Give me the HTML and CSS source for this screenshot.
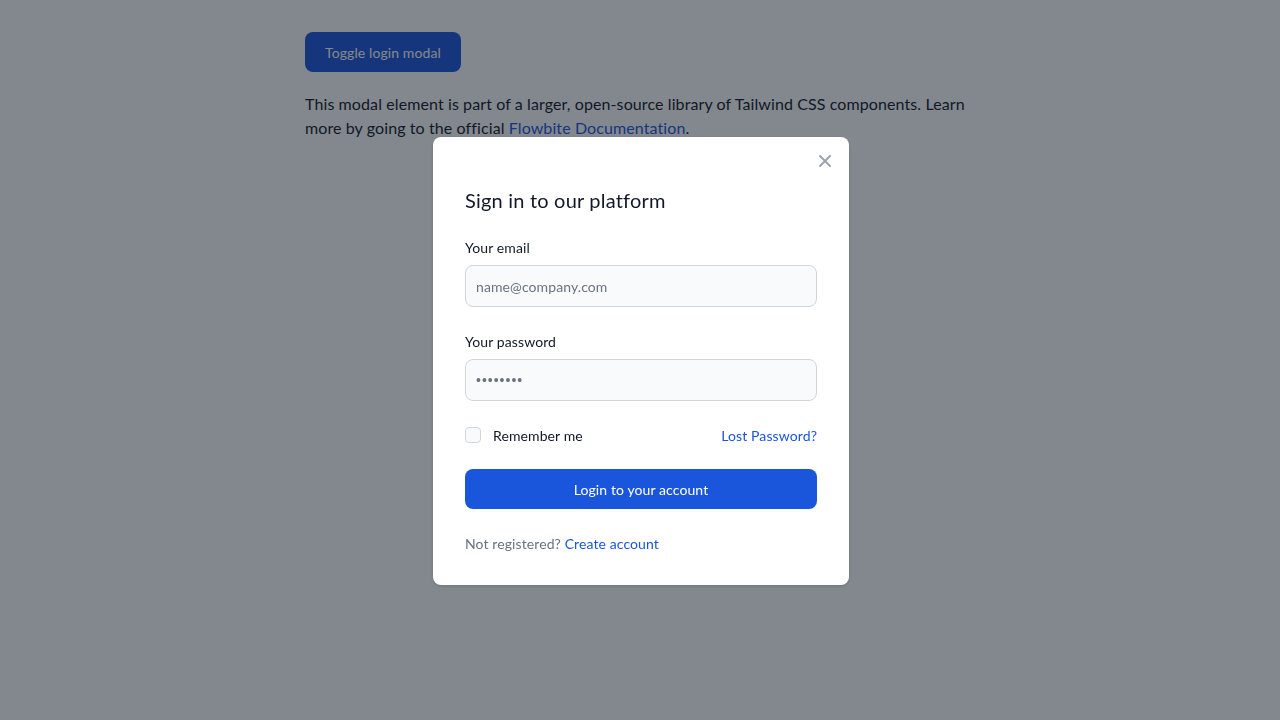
FILE: index.html
```html
<!DOCTYPE html>
<html lang="en">
<head>
<meta charset="utf-8">
<title>Login modal</title>
<link rel="stylesheet" href="styles.css">
</head>
<body>
<main class="page">
  <button class="toggle-btn" type="button">Toggle login modal</button>
  <p class="intro">This modal element is part of a larger, open-source library of Tailwind CSS components. Learn more by going to the official <a href="#" class="link">Flowbite Documentation</a>.</p>
</main>

<div class="overlay">
  <div class="modal">
    <div class="modal-header">
      <button class="close-btn" type="button" aria-label="Close">
        <svg width="20" height="20" viewBox="0 0 20 20" fill="currentColor"><path fill-rule="evenodd" d="M4.293 4.293a1 1 0 011.414 0L10 8.586l4.293-4.293a1 1 0 111.414 1.414L11.414 10l4.293 4.293a1 1 0 01-1.414 1.414L10 11.414l-4.293 4.293a1 1 0 01-1.414-1.414L8.586 10 4.293 5.707a1 1 0 010-1.414z" clip-rule="evenodd"/></svg>
      </button>
    </div>
    <form class="modal-body">
      <h3 class="title">Sign in to our platform</h3>
      <div class="field field-email">
        <label class="label" for="email">Your email</label>
        <input class="input" type="email" id="email" placeholder="name@company.com">
      </div>
      <div class="field">
        <label class="label" for="password">Your password</label>
        <input class="input input-password" type="password" id="password" placeholder="••••••••">
      </div>
      <div class="row">
        <label class="remember"><span class="checkbox"></span><span>Remember me</span></label>
        <a href="#" class="link small">Lost Password?</a>
      </div>
      <button class="submit" type="button">Login to your account</button>
      <div class="register">Not registered? <a href="#" class="link">Create account</a></div>
    </form>
  </div>
</div>
</body>
</html>
```

FILE: styles.css
```css
* { box-sizing: border-box; }
html, body { margin: 0; padding: 0; }
body {
  background: #ffffff;
  font-family: "Lato", "Noto Sans", sans-serif;
  color: #111827;
  letter-spacing: 0.1px;
}
.page {
  width: 670px;
  margin-left: 305px;
  padding-top: 32px;
}
.toggle-btn {
  display: block;
  height: 40px;
  padding: 0 20px;
  border: 0;
  border-radius: 8px;
  background: #1a56db;
  color: #ffffff;
  font-family: inherit;
  font-size: 14px;
  letter-spacing: 0.1px;
}
.intro {
  margin: 20px 0 0;
  font-size: 16px;
  line-height: 24px;
  color: #111827;
}
.link { color: #1a56db; text-decoration: none; }
.overlay {
  position: fixed;
  inset: 0;
  background: rgba(17, 24, 39, 0.52);
  display: flex;
  justify-content: center;
  align-items: flex-start;
  padding-top: 137px;
  padding-left: 2px;
}
.modal {
  width: 416px;
  background: #ffffff;
  border-radius: 8px;
  box-shadow: 0 1px 3px rgba(0,0,0,0.15);
}
.modal-header {
  display: flex;
  justify-content: flex-end;
  padding: 8px 8px 0;
}
.close-btn {
  width: 32px;
  height: 32px;
  display: flex;
  align-items: center;
  justify-content: center;
  border: 0;
  background: transparent;
  color: #9ca3af;
  padding: 0;
  border-radius: 8px;
}
.modal-body {
  display: flex;
  flex-direction: column;
  gap: 24px;
  padding: 9px 32px 31px;
}
.title {
  margin: 0;
  font-size: 20px;
  line-height: 28px;
  font-weight: 400;
  color: #111827;
  letter-spacing: 0.2px;
}
.field { display: flex; flex-direction: column; }
.field-email { margin-bottom: 1px; }
.label {
  font-size: 14px;
  line-height: 20px;
  margin-bottom: 7px;
  color: #111827;
}
.input {
  height: 42px;
  border: 1px solid #d1d5db;
  background: #f9fafb;
  border-radius: 8px;
  padding: 0 10px;
  font-family: inherit;
  font-size: 14px;
  color: #111827;
  letter-spacing: 0.1px;
}
.input::placeholder { color: #6b7280; }
.input-password {
  font-family: "Liberation Sans", sans-serif;
  letter-spacing: 1px;
}
.input-password::placeholder { color: #6b7280; }
.row {
  display: flex;
  justify-content: space-between;
  align-items: center;
  height: 20px;
  font-size: 14px;
}
.remember { display: flex; align-items: center; gap: 12px; color: #111827; }
.checkbox {
  width: 16px;
  height: 16px;
  border: 1px solid #d1d5db;
  background: #f9fafb;
  border-radius: 4px;
}
.small { font-size: 14px; }
.submit {
  height: 40px;
  border: 0;
  border-radius: 8px;
  background: #1a56db;
  color: #ffffff;
  font-family: inherit;
  font-size: 14px;
  letter-spacing: 0.1px;
}
.register {
  margin-top: 1px;
  font-size: 14px;
  line-height: 20px;
  color: #6b7280;
}
```
